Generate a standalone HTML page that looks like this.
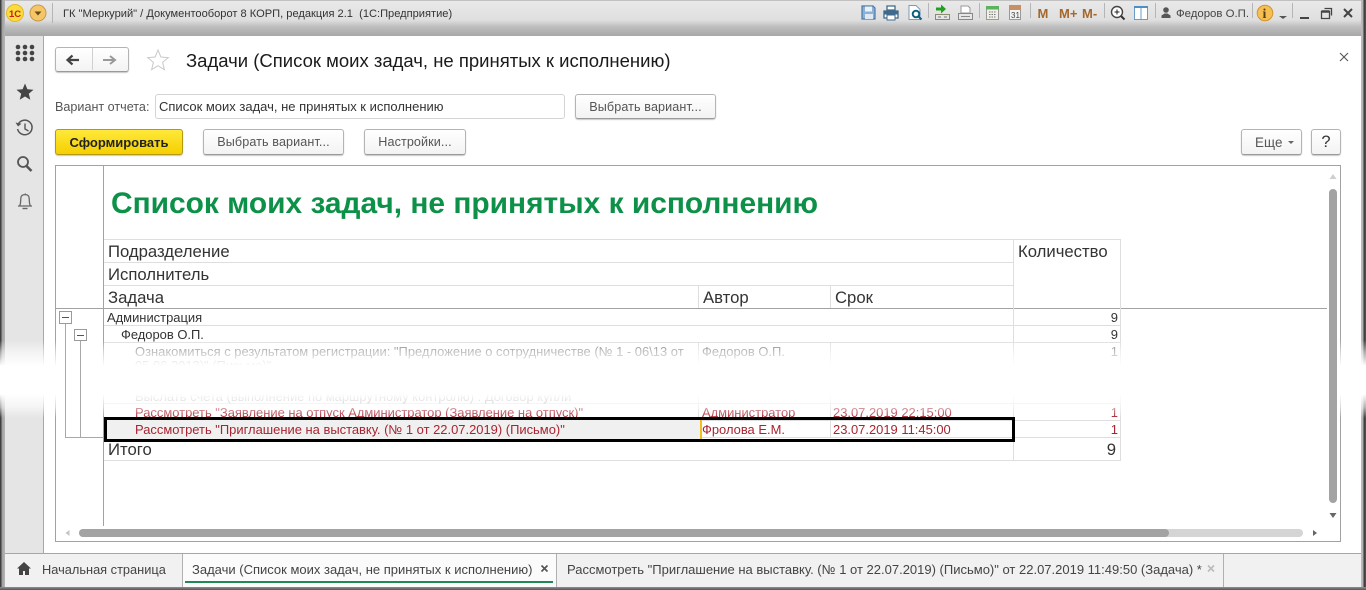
<!DOCTYPE html>
<html lang="ru"><head><meta charset="utf-8"><title>Задачи</title>
<style>
*{box-sizing:border-box}
html,body{margin:0;padding:0;width:1366px;height:590px;overflow:hidden;background:#fff}
body{position:relative;font-family:"Liberation Sans",Arial,sans-serif;color:#333}
.a{position:absolute}
.t{position:absolute;white-space:nowrap;line-height:16px}
.btn{position:absolute;border:1px solid #b4b4b4;border-bottom-color:#9a9a9a;border-radius:3px;background:linear-gradient(#fff,#f3f3f3);box-shadow:0 1px 1px rgba(0,0,0,.22);font-size:12.6px;color:#555;text-align:center;letter-spacing:.1px}
.h{background:#dedede}
.v{background:#dedede}
.r{font-size:12.95px;position:absolute;white-space:nowrap;line-height:16px}
.n{position:absolute;left:1013px;width:105px;text-align:right;font-size:13px;line-height:16px}
.g{color:#777}.red{color:#a82430}
.hd{font-size:16.7px;color:#333;position:absolute;white-space:nowrap;line-height:18px}
.sep{position:absolute;top:8px;width:1px;height:15px;background:#b5b5b5}
</style></head><body>

<!-- top bar -->
<div class="a" style="left:0;top:0;width:1366px;height:36px;background:linear-gradient(#9a9a9a 0,#e9e9e9 1px,#dfdfdf 20px,#bdbdbd 27px,#a9a9a9 35px)"></div>
<div class="t" style="left:63px;top:6px;font-size:11.1px;color:#333">ГК "Меркурий" / Документооборот 8 КОРП, редакция 2.1&nbsp; (1С:Предприятие)</div>
<div class="t" style="left:1176px;top:6px;font-size:11.4px;color:#444">Федоров О.П.</div>
<div class="sep" style="left:52px;top:3px;height:20px"></div>
<div class="sep" style="left:928px;top:3px"></div><div class="sep" style="left:979px;top:3px"></div><div class="sep" style="left:1030px;top:3px"></div><div class="sep" style="left:1104px;top:3px"></div><div class="sep" style="left:1155px;top:3px"></div><div class="sep" style="left:1252px;top:3px"></div><div class="sep" style="left:1292px;top:3px"></div>

<!-- window edges and sidebar -->
<div class="a" style="left:0;top:0;width:5px;height:590px;background:linear-gradient(90deg,#3f3f3f 0,#3f3f3f 1px,#9f9f9f 2px,#b5b5b5 5px)"></div>
<div class="a" style="left:1361px;top:0;width:5px;height:590px;background:linear-gradient(90deg,#bdbdbd 0,#b0b0b0 2px,#3a3a3a 3px,#555 5px)"></div>
<div class="a" style="left:5px;top:36px;width:39px;height:517px;background:#e5e5e5;border-right:1px solid #a8a8a8"></div>

<!-- form header -->
<div class="btn" style="left:55px;top:47px;width:74px;height:25px"></div>
<div class="a" style="left:92px;top:48px;width:1px;height:22px;background:#d0d0d0"></div>
<div class="t" style="left:186px;top:51px;font-size:18.5px;line-height:20px;color:#1a1a1a">Задачи (Список моих задач, не принятых к исполнению)</div>
<div class="t" style="left:55px;top:99px;font-size:12.6px;color:#555">Вариант отчета:</div>
<div class="a" style="left:155px;top:94px;width:410px;height:25px;border:1px solid #d4d4d4;border-radius:3px;background:#fff"></div>
<div class="t" style="left:159px;top:99px;font-size:13px;color:#333">Список моих задач, не принятых к исполнению</div>
<div class="btn" style="left:575px;top:94px;width:141px;height:25px;line-height:25px">Выбрать вариант...</div>
<div class="btn" style="left:55px;top:129px;width:128px;height:26px;line-height:25px;background:linear-gradient(#ffe93a,#f5cf00);border-color:#b39a10;color:#222;font-weight:bold;font-size:13px;letter-spacing:0">Сформировать</div>
<div class="btn" style="left:203px;top:129px;width:141px;height:26px;line-height:25px">Выбрать вариант...</div>
<div class="btn" style="left:364px;top:129px;width:102px;height:26px;line-height:25px">Настройки...</div>
<div class="btn" style="left:1241px;top:129px;width:61px;height:26px;line-height:25px;text-align:left;padding-left:13px;font-size:13.4px">Еще</div>
<div class="btn" style="left:1311px;top:129px;width:30px;height:26px;line-height:25px;font-size:16.5px;color:#333">?</div>

<!-- report frame -->
<div class="a" style="left:55px;top:165px;width:1286px;height:377px;border:1px solid #a2a2a2;background:#fff"></div>
<div class="a" style="left:103px;top:166px;width:1px;height:360px;background:#a2a2a2"></div>
<div class="t" style="left:111px;top:186px;font-size:29.9px;line-height:36px;font-weight:bold;color:#0d9149">Список моих задач, не принятых к исполнению</div>

<!-- grid lines -->
<div class="a h" style="left:104px;top:239px;width:1017px;height:1px"></div>
<div class="a h" style="left:104px;top:262px;width:909px;height:1px"></div>
<div class="a h" style="left:104px;top:285px;width:909px;height:1px"></div>
<div class="a" style="left:55px;top:308px;width:1272px;height:1px;background:#a2a2a2"></div>
<div class="a h" style="left:104px;top:325px;width:1017px;height:1px"></div>
<div class="a h" style="left:104px;top:342px;width:1017px;height:1px"></div>
<div class="a h" style="left:104px;top:403px;width:1017px;height:1px"></div>
<div class="a h" style="left:104px;top:420px;width:1017px;height:1px"></div>
<div class="a h" style="left:104px;top:437px;width:1017px;height:1px"></div>
<div class="a h" style="left:104px;top:460px;width:1017px;height:1px"></div>
<div class="a v" style="left:698px;top:285px;width:1px;height:23px"></div>
<div class="a v" style="left:830px;top:285px;width:1px;height:23px"></div>
<div class="a v" style="left:698px;top:342px;width:1px;height:95px"></div>
<div class="a v" style="left:830px;top:342px;width:1px;height:95px"></div>
<div class="a v" style="left:1013px;top:239px;width:1px;height:222px"></div>
<div class="a v" style="left:1120px;top:239px;width:1px;height:222px"></div>

<!-- table text -->
<div class="hd" style="left:108px;top:243px">Подразделение</div>
<div class="hd" style="left:108px;top:266px">Исполнитель</div>
<div class="hd" style="left:108px;top:289px">Задача</div>
<div class="hd" style="left:703px;top:289px">Автор</div>
<div class="hd" style="left:835px;top:289px">Срок</div>
<div class="hd" style="left:1018px;top:243px">Количество</div>

<div class="r" style="left:107px;top:310px">Администрация</div><div class="n" style="top:310px">9</div>
<div class="r" style="left:121px;top:327px">Федоров О.П.</div><div class="n" style="top:327px">9</div>
<div class="r g" style="left:135px;top:344px">Ознакомиться с результатом регистрации: "Предложение о сотрудничестве (№ 1 - 06\13 от</div>
<div class="r g" style="left:135px;top:358px">05.06.2013)" (Письмо)"</div>
<div class="r g" style="left:702px;top:344px">Федоров О.П.</div><div class="n g" style="top:344px">1</div>
<div class="r g" style="left:135px;top:389px">Выслать счета (выполнение по маршрутному контролю) : Договор купли</div>
<div class="r red" style="left:135px;top:405px">Рассмотреть "Заявление на отпуск Администратор (Заявление на отпуск)"</div>
<div class="r red" style="left:702px;top:405px">Администратор</div>
<div class="r red" style="left:833px;top:405px">23.07.2019 22:15:00</div>
<div class="n red" style="top:405px">1</div>

<!-- fade band -->
<div class="a" style="left:0;top:340px;width:1366px;height:80px;background:linear-gradient(rgba(255,255,255,0) 0,rgba(255,255,255,.55) 12px,#fff 26px,#fff 54px,rgba(255,255,255,.6) 67px,rgba(255,255,255,0) 78px)"></div>

<!-- highlighted row -->
<div class="a" style="left:104px;top:417px;width:597px;height:25px;background:#f0f0f0"></div>
<div class="a" style="left:700px;top:420px;width:2px;height:19px;background:#f0c020"></div>
<div class="a" style="left:104px;top:417px;width:911px;height:25px;border:3px solid #000"></div>
<div class="r red" style="left:135px;top:422px">Рассмотреть "Приглашение на выставку. (№ 1 от 22.07.2019) (Письмо)"</div>
<div class="r red" style="left:702px;top:422px">Фролова Е.М.</div>
<div class="r red" style="left:833px;top:422px">23.07.2019 11:45:00</div>
<div class="n red" style="top:422px">1</div>
<div class="hd" style="left:108px;top:441px">Итого</div>
<div class="hd" style="left:1013px;width:103px;text-align:right;top:441px">9</div>

<!-- bottom tabs -->
<div class="a" style="left:5px;top:553px;width:1356px;height:34px;background:#f1f1f1;border-top:1px solid #a6a6a6"></div>
<div class="a" style="left:182px;top:554px;width:375px;height:33px;background:#fbfbfb;border-left:1px solid #b0b0b0;border-right:1px solid #b0b0b0"></div>
<div class="a" style="left:1223px;top:554px;width:1px;height:33px;background:#b0b0b0"></div>
<div class="a" style="left:185px;top:581px;width:368px;height:2px;background:#1f8a55"></div>
<div class="a" style="left:0;top:587px;width:1366px;height:3px;background:linear-gradient(#8e8e8e,#555)"></div>
<div class="t" style="left:42px;top:562px;font-size:12.8px;color:#444">Начальная страница</div>
<div class="t" style="left:192px;top:562px;font-size:13px;color:#444">Задачи (Список моих задач, не принятых к исполнению)</div>
<div class="t" style="left:567px;top:562px;font-size:13px;color:#444">Рассмотреть "Приглашение на выставку. (№ 1 от 22.07.2019) (Письмо)" от 22.07.2019 11:49:50 (Задача) *</div>

<!-- icons -->
<svg class="a" style="left:0;top:0" width="1366" height="590" viewBox="0 0 1366 590" fill="none">
<!-- 1C logo and menu -->
<circle cx="15" cy="13" r="8.5" fill="#fbdc3c" stroke="#e3b92a"/>
<text x="9" y="17" font-family="Liberation Sans" font-weight="bold" font-size="9.5" fill="#c8201a">1С</text>
<circle cx="38" cy="13" r="8" fill="#f5c668" stroke="#c79a4a"/>
<path d="M34.5 11.5h7L38 15.5z" fill="#6b4a16"/>
<!-- toolbar left group -->
<path d="M862 6h11l2 2v11h-13z" fill="#8db0d3" stroke="#4a7aa8" stroke-width="1.2"/><path d="M865 6.5h7v5h-7z" fill="#eaf1f8"/><path d="M865 14h8v5h-8z" fill="#dfe9f3"/>
<path d="M887 6h8v4h-8zM884 11h14v7h-14z" fill="#fff" stroke="#3f6a8c" stroke-width="1.3"/><path d="M884 11h14v3.500h-14z" fill="#3f6a8c"/><path d="M887 15h8v5h-8z" fill="#fff" stroke="#3f6a8c"/>
<path d="M909 5.5h7l4 4v10h-11z" fill="#fff" stroke="#7c9ab4"/><circle cx="916" cy="14" r="3.3" fill="#fff" stroke="#0d5f80" stroke-width="2"/><path d="M918.5 16.5l3 3" stroke="#0d5f80" stroke-width="2"/>
<path d="M937 8.5h5v-3l5 4.5-5 4.5v-3h-5z" fill="#22a022" transform="translate(-1 -1)"/>
<path d="M935.500 14.500h14v5h-14z" fill="#e6e6e6" stroke="#8b8b6f"/><path d="M938 17h3M944 17h3" stroke="#777"/>
<path d="M961 6h7l2 2v5h-9z" fill="#fff" stroke="#999"/><path d="M958.500 13.500h14v6h-14z" fill="#e6e6e6" stroke="#888"/><path d="M961 16.500h9" stroke="#888"/>
<rect x="986.500" y="6.500" width="12" height="13" fill="#efefe8" stroke="#999"/><path d="M986 6h13v3.500h-13z" fill="#5db35d"/><path d="M989 12h7M989 14.500h7M989 17h7" stroke="#777" stroke-dasharray="1.500 1"/>
<rect x="1009.500" y="7.500" width="11" height="12" fill="#f3f3f3" stroke="#999"/><path d="M1009 5h12v5h-12z" fill="#c88f63"/>
<text x="1011" y="18" font-family="Liberation Sans" font-size="8" fill="#444">31</text>
<text x="1037.500" y="18" font-family="Liberation Sans" font-weight="bold" font-size="13" fill="#a5672c">M</text>
<text x="1059" y="18" font-family="Liberation Sans" font-weight="bold" font-size="13" fill="#a5672c">M+</text>
<text x="1082" y="18" font-family="Liberation Sans" font-weight="bold" font-size="13" fill="#a5672c">M-</text>
<circle cx="1117" cy="12" r="5.500" fill="#fff" stroke="#444" stroke-width="1.400"/><path d="M1121 16l3.500 3.500" stroke="#333" stroke-width="2"/><path d="M1114.500 12h5M1117 9.500v5" stroke="#222"/>
<rect x="1134.500" y="6.500" width="13" height="13" fill="#fff" stroke="#6a9cc8"/><path d="M1134 6h14v2h-14z" fill="#4f8fc4"/><path d="M1141 8v11" stroke="#6a9cc8"/>
<!-- user -->
<circle cx="1166" cy="10" r="2.800" fill="#555"/><path d="M1161.500 18v-2.500l3-2h3l3 2v2.500z" fill="#555"/>
<!-- info, down -->
<circle cx="1265" cy="13" r="7.800" fill="#f6bf52" stroke="#d29432"/>
<text x="1262.500" y="18" font-family="Liberation Serif" font-weight="bold" font-size="14" fill="#5c3f12">i</text>
<path d="M1279 16h8l-4 3z" fill="#555"/>
<!-- window controls -->
<path d="M1300 18h9" stroke="#444" stroke-width="2"/>
<path d="M1324.500 8.500h7v7M1321.500 11.500h8v7h-8z" stroke="#444" stroke-width="1.300"/><path d="M1321.500 11.500h8" stroke="#444" stroke-width="2.500"/>
<path d="M1344 9l8 8M1352 9l-8 8" stroke="#444" stroke-width="2"/>
<!-- sidebar -->
<g fill="#444"><circle cx="18" cy="47" r="2.300"/><circle cx="25" cy="47" r="2.300"/><circle cx="32" cy="47" r="2.300"/><circle cx="18" cy="53" r="2.300"/><circle cx="25" cy="53" r="2.300"/><circle cx="32" cy="53" r="2.300"/><circle cx="18" cy="59" r="2.300"/><circle cx="25" cy="59" r="2.300"/><circle cx="32" cy="59" r="2.300"/></g>
<path d="M25 83.500l2.400 5.700 6.100.5-4.700 4 1.500 6-5.300-3.200-5.300 3.200 1.500-6-4.700-4 6.100-.5z" fill="#444"/>
<path d="M18.300 124a7.300 7.300 0 1 1-.7 5" stroke="#555" stroke-width="1.500"/><path d="M15.500 122.500l2.500 4 3.500-2.800z" fill="#555"/><path d="M25 123.500v5.500l3.500 2" stroke="#555" stroke-width="1.400"/>
<circle cx="23" cy="162" r="5" stroke="#555" stroke-width="1.800"/><path d="M26.500 166l5 5" stroke="#555" stroke-width="2.600"/>
<path d="M25 193.500a1 1 0 0 1 0 1M19.500 206c2-3 .5-8 2-10 1.500-1.800 5.500-1.800 7 0 1.500 2 0 7 2 10zM18 206h14" stroke="#666" stroke-width="1.300"/><path d="M22.500 208.500h5" stroke="#666" stroke-width="1.400"/>
<!-- nav -->
<path d="M67 60h12M72.500 55.500L67.500 60l5 4.500" stroke="#444" stroke-width="2.200" fill="none"/><path d="M103 60h12M110 56l5 4-5 4" stroke="#999" stroke-width="2"/>
<path d="M158 50l2.900 7 7.400.6-5.700 4.800 1.800 7.300-6.400-4-6.400 4 1.800-7.300-5.700-4.800 7.400-.6z" fill="#fff" stroke="#c9c9c9"/>
<path d="M1340 53l8 8M1348 53l-8 8" stroke="#555" stroke-width="1.100"/>
<path d="M1288 141h6l-3 3z" fill="#666"/>
<!-- tree -->
<path d="M65.500 323v114M80.500 341v96M65 437.500h39" stroke="#a8a8a8"/>
<rect x="59.500" y="311.500" width="12" height="12" fill="#fff" stroke="#9a9a9a"/><path d="M62 317.500h7" stroke="#555"/>
<rect x="74.500" y="329.500" width="12" height="11" fill="#fff" stroke="#9a9a9a"/><path d="M77 335.500h7" stroke="#555"/>
<!-- scrollbars -->
<rect x="1329" y="189" width="8" height="314" rx="4" fill="#a3a3a3"/>
<rect x="79" y="529" width="1224" height="8" rx="4" fill="#d5d5d5"/>
<rect x="79" y="529" width="1090" height="8" rx="4" fill="#a3a3a3"/>
<path d="M1329.500 179h7l-3.500-5z" fill="#cfcfcf"/><path d="M1329.500 513h7l-3.500 5z" fill="#666"/>
<path d="M69.500 530v6l-4-3z" fill="#c4c4c4"/><path d="M1313 530v6l4-3z" fill="#666"/>
<!-- tabs -->
<path d="M24 562l-7 6.500h2v6.500h4v-4h2v4h4v-6.500h2z" fill="#444"/>
<path d="M541.500 565.500l6 6M547.500 565.500l-6 6" stroke="#555" stroke-width="1.600"/>
<path d="M1208 565.500l6 6M1214 565.500l-6 6" stroke="#bbb" stroke-width="1.600"/>
</svg>
</body></html>
